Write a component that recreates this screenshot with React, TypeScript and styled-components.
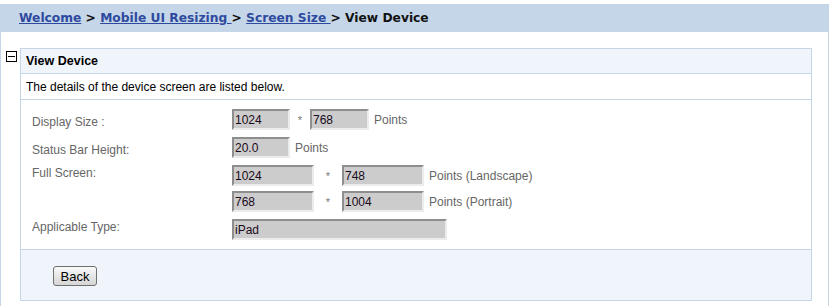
import styled, { createGlobalStyle } from 'styled-components';

const GlobalStyle = createGlobalStyle`
  body {
    margin: 0;
    background: #ffffff;
    font-family: 'Liberation Sans', Arial, sans-serif;
  }
`;

const LINE = '#c5d6e8';

const crumbs = [
  { label: 'Welcome', link: true },
  { label: 'Mobile UI Resizing ', link: true },
  { label: 'Screen Size ', link: true },
  { label: 'View Device', link: false },
];

export default function App() {
  return (
    <>
      <GlobalStyle />
      <Page>
        <CrumbBar>
          {crumbs.map((c, i) => (
            <span key={c.label}>
              {i > 0 && <Sep>{crumbs[i - 1].label.endsWith(' ') ? '> ' : ' > '}</Sep>}
              {c.link ? <CrumbLink href="#">{c.label}</CrumbLink> : <CrumbCurrent>{c.label}</CrumbCurrent>}
            </span>
          ))}
        </CrumbBar>
        <Body>
          <Toggle aria-label="collapse" />
          <Panel>
            <PanelTitle>View Device</PanelTitle>
            <PanelDesc>The details of the device screen are listed below.</PanelDesc>
            <Form>
              <Field>
                <Label $top={6}>Display Size :</Label>
                <Values>
                  <Line>
                    <Box $w={58} readOnly value="1024" />
                    <Star $w={20}>*</Star>
                    <Box $w={59} readOnly value="768" />
                    <Unit>Points</Unit>
                  </Line>
                </Values>
              </Field>
              <Field>
                <Label $top={6}>Status Bar Height:</Label>
                <Values>
                  <Line>
                    <Box $w={58} readOnly value="20.0" />
                    <Unit>Points</Unit>
                  </Line>
                </Values>
              </Field>
              <Field>
                <Label $top={1}>Full Screen:</Label>
                <Values>
                  <Line>
                    <Box $w={82} readOnly value="1024" />
                    <Star $w={28}>*</Star>
                    <Box $w={82} readOnly value="748" />
                    <Unit>Points (Landscape)</Unit>
                  </Line>
                  <Line>
                    <Box $w={82} readOnly value="768" />
                    <Star $w={28}>*</Star>
                    <Box $w={82} readOnly value="1004" />
                    <Unit>Points (Portrait)</Unit>
                  </Line>
                </Values>
              </Field>
              <Field>
                <Label $top={1}>Applicable Type:</Label>
                <Values>
                  <Line>
                    <Box $w={215} readOnly value="iPad" />
                  </Line>
                </Values>
              </Field>
            </Form>
            <Footer>
              <Button type="button">Back</Button>
            </Footer>
          </Panel>
        </Body>
      </Page>
    </>
  );
}

const Page = styled.div`
  width: 827px;
  margin-top: 4px;
  border-left: 1px solid ${LINE};
  border-right: 1px solid ${LINE};
  min-height: 302px;
`;

const CrumbBar = styled.div`
  height: 28px;
  background: ${LINE};
  padding-left: 18px;
  display: flex;
  align-items: center;
  font-family: 'DejaVu Sans', Verdana, sans-serif;
  font-weight: bold;
  font-size: 12.25px;
  color: #111;
  white-space: pre;
`;

const CrumbLink = styled.a`
  color: #2d4a9f;
  text-decoration: underline;
`;

const CrumbCurrent = styled.span`
  color: #111;
`;

const Sep = styled.span`
  color: #111;
`;

const Body = styled.div`
  display: flex;
  align-items: flex-start;
  padding-top: 16px;
  padding-left: 5px;
`;

const Toggle = styled.div`
  position: relative;
  width: 9px;
  height: 9px;
  border: 1px solid #000;
  margin-top: 3px;
  margin-right: 3px;
  &::after {
    content: '';
    position: absolute;
    left: 1px;
    right: 1px;
    top: 4px;
    height: 1px;
    background: #000;
  }
`;

const Panel = styled.div`
  width: 790px;
  border: 1px solid ${LINE};
`;

const PanelTitle = styled.div`
  height: 24px;
  background: #f0f5fc;
  padding-left: 5px;
  display: flex;
  align-items: center;
  font-size: 12.5px;
  font-weight: bold;
  color: #000;
`;

const PanelDesc = styled.div`
  height: 25px;
  border-top: 1px solid ${LINE};
  padding-left: 5px;
  display: flex;
  align-items: center;
  font-size: 12px;
  color: #000;
`;

const Form = styled.div`
  border-top: 1px solid ${LINE};
  padding: 9px 0 9px 11px;
  display: flex;
  flex-direction: column;
  gap: 7px;
`;

const Field = styled.div`
  display: flex;
  align-items: flex-start;
`;

const Label = styled.div<{ $top: number }>`
  width: 200px;
  padding-top: ${(p) => p.$top}px;
  font-size: 12px;
  line-height: 14px;
  color: #666;
`;

const Values = styled.div`
  display: flex;
  flex-direction: column;
  gap: 5px;
`;

const Line = styled.div`
  display: flex;
  align-items: center;
`;

const Box = styled.input<{ $w: number }>`
  box-sizing: border-box;
  width: ${(p) => p.$w}px;
  height: 21px;
  margin: 0;
  padding: 0 1px;
  background: #cccccc;
  border-style: solid;
  border-width: 2px;
  border-color: #8e8e8e #ececec #ececec #8e8e8e;
  font-family: 'Liberation Sans', Arial, sans-serif;
  font-size: 12px;
  color: #1a0a1a;
  outline: none;
`;

const Star = styled.span<{ $w: number }>`
  width: ${(p) => p.$w}px;
  text-align: center;
  font-size: 11px;
  color: #777;
`;

const Unit = styled.span`
  margin-left: 5px;
  font-size: 12px;
  color: #666;
`;

const Footer = styled.div`
  height: 51px;
  border-top: 1px solid ${LINE};
  background: #f0f5fc;
  padding: 16px 0 0 32px;
  box-sizing: border-box;
`;

const Button = styled.button`
  width: 44px;
  height: 20px;
  padding: 0;
  border: 1px solid #707070;
  border-radius: 3px;
  background: linear-gradient(#fafafa, #e6e6e6 50%, #d6d6d6);
  font-family: 'Liberation Sans', Arial, sans-serif;
  font-size: 13px;
  color: #000;
`;
